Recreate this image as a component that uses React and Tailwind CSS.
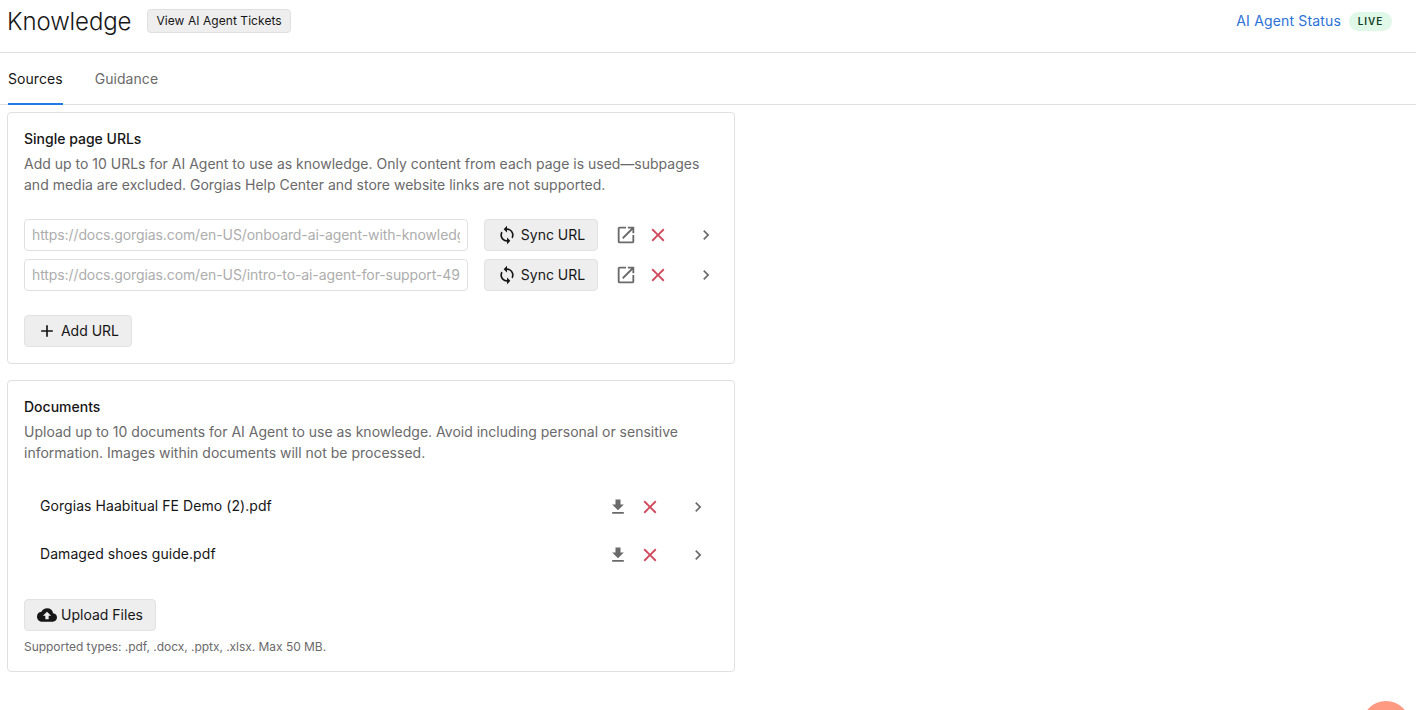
import { MdSync, MdOpenInNew, MdClose, MdChevronRight, MdFileDownload, MdCloudUpload, MdAdd } from 'react-icons/md';

const urls = [
  'https://docs.gorgias.com/en-US/onboard-ai-agent-with-knowledge-articles-123',
  'https://docs.gorgias.com/en-US/intro-to-ai-agent-for-support-49',
];

const docs = ['Gorgias Haabitual FE Demo (2).pdf', 'Damaged shoes guide.pdf'];

function GrayButton({ children, className = '' }) {
  return (
    <button className={`flex items-center justify-center h-8 shrink-0 rounded-[4px] border border-[#e2e2e2] bg-[#eeeeee] text-sm text-[#161616] ${className}`}>
      {children}
    </button>
  );
}

function UrlRow({ url }) {
  return (
    <div className="flex items-center h-8">
      <input
        readOnly
        value={url}
        className="w-[444px] h-8 shrink-0 rounded-[4px] border border-[#e0e0e0] bg-white pl-[7px] pr-[7px] pb-px text-sm tracking-[-0.1px] text-[#adadad] outline-none"
      />
      <GrayButton className="ml-4 w-[114px] gap-1">
        <MdSync size={20} />
        <span>Sync URL</span>
      </GrayButton>
      <MdOpenInNew size={22} className="ml-[17px] text-[#6a6a6a]" />
      <MdClose size={22} className="ml-[10px] text-[#d1475a]" />
      <MdChevronRight size={20} className="ml-[27px] text-[#6a6a6a]" />
    </div>
  );
}

function DocRow({ name }) {
  return (
    <div className="flex items-center h-12 pl-4">
      <span className="w-[568px] shrink-0 text-sm tracking-[0.06px] text-[#161616]">{name}</span>
      <MdFileDownload size={20} className="mt-0.5 text-[#6a6a6a]" />
      <MdClose size={22} className="mt-0.5 ml-[11px] text-[#d1475a]" />
      <MdChevronRight size={20} className="mt-0.5 ml-[27px] text-[#6a6a6a]" />
    </div>
  );
}

export default function App() {
  return (
    <div className="relative h-[710px] overflow-hidden bg-white font-['Inter',sans-serif] text-[#161616]">
      <header className="flex items-center justify-between h-[53px] pl-[7px] pr-6 pb-[10px] border-b border-[#e0e0e0]">
        <div className="flex items-center">
          <h1 className="mt-[2px] text-2xl font-light leading-8 tracking-[-0.1px]">Knowledge</h1>
          <button className="ml-4 h-6 px-2 rounded-[4px] border border-[#e0e0e0] bg-[#eeeeee] text-xs tracking-[0.06px] text-[#161616]">
            View AI Agent Tickets
          </button>
        </div>
        <div className="flex items-center gap-2">
          <span className="text-sm tracking-[0.16px] text-[#2b72d7]">AI Agent Status</span>
          <span className="flex items-center justify-center w-[43px] h-[19px] rounded-full bg-[#e0f8e8] text-[10px] font-semibold tracking-[0.09em] text-[#123f24]">LIVE</span>
        </div>
      </header>

      <nav className="flex gap-8 h-[52px] pl-2 border-b border-[#e0e0e0]">
        <div className="flex items-center h-[52px] pt-0.5 border-b-2 border-[#1f7ae6] text-sm tracking-[0.06px]">Sources</div>
        <div className="flex items-center h-[52px] pt-0.5 border-b-2 border-transparent text-sm tracking-[0.06px] text-[#6a6a6a]">Guidance</div>
      </nav>

      <main className="flex flex-col gap-4 w-[728px] ml-[7px] mt-[7px]">
        <section className="rounded-[4px] border border-[#e0e0e0] p-4">
          <h2 className="h-5 text-sm font-medium leading-5">Single page URLs</h2>
          <p className="mt-1 text-sm leading-[21px] text-[#6a6a6a]">
            Add up to 10 URLs for AI Agent to use as knowledge. Only content from each page is used—subpages and media are excluded. Gorgias Help Center and store website links are not supported.
          </p>
          <div className="mt-6 flex flex-col gap-2">
            {urls.map((url) => <UrlRow key={url} url={url} />)}
          </div>
          <GrayButton className="mt-6 w-[108px] gap-1">
            <MdAdd size={20} />
            <span>Add URL</span>
          </GrayButton>
        </section>

        <section className="rounded-[4px] border border-[#e0e0e0] p-4">
          <h2 className="h-5 text-sm font-medium leading-5">Documents</h2>
          <p className="mt-1 text-sm leading-[21px] text-[#6a6a6a]">
            Upload up to 10 documents for AI Agent to use as knowledge. Avoid including personal or sensitive information. Images within documents will not be processed.
          </p>
          <div className="mt-[19px]">
            {docs.map((name) => <DocRow key={name} name={name} />)}
          </div>
          <GrayButton className="mt-[21px] w-[132px] gap-1">
            <MdCloudUpload size={20} />
            <span>Upload Files</span>
          </GrayButton>
          <p className="mt-2 text-xs leading-4 tracking-[-0.036px] text-[#6a6a6a]">Supported types: .pdf, .docx, .pptx, .xlsx. Max 50 MB.</p>
        </section>
      </main>

      <div className="absolute left-[1362px] top-[701px] size-12 rounded-full bg-[#ff9a82]" />
    </div>
  );
}
